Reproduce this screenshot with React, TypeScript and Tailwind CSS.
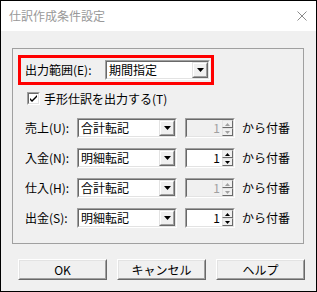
import React from "react";

const font = { fontFamily: '"Noto Sans CJK JP", "Noto Sans", sans-serif' };

function DropBtn({ disabled = false }: { disabled?: boolean }) {
  return (
    <div className="w-[16px] h-full border border-t-[#e3e3e3] border-l-[#e3e3e3] border-b-[#696969] border-r-[#696969] bg-[#f0f0f0]">
      <div className="w-full h-full border border-t-white border-l-white border-b-[#a0a0a0] border-r-[#a0a0a0] flex items-center justify-center">
        <svg width="7" height="4" viewBox="0 0 7 4">
          <polygon points="0,0 7,0 3.5,4" fill={disabled ? "#a0a0a0" : "#000"} />
        </svg>
      </div>
    </div>
  );
}

function Sunken({ className, children, bg = "bg-white" }: { className: string; children: React.ReactNode; bg?: string }) {
  return (
    <div className={`${className} border border-t-[#a0a0a0] border-l-[#a0a0a0] border-b-white border-r-white`}>
      <div className={`w-full h-full border border-t-[#696969] border-l-[#696969] border-b-[#e3e3e3] border-r-[#e3e3e3] ${bg} flex items-center`}>
        {children}
      </div>
    </div>
  );
}

function Combo({ value, width }: { value: string; width: string }) {
  return (
    <Sunken className={`${width} h-[20px]`}>
      <span className="flex-1 pl-[2px] text-[12px] leading-none text-black">{value}</span>
      <DropBtn />
    </Sunken>
  );
}

function Spin({ enabled }: { enabled: boolean }) {
  return (
    <Sunken className="w-[50px] h-[20px]" bg={enabled ? "bg-white" : "bg-[#f0f0f0]"}>
      <span className={`flex-1 text-right pr-[2px] text-[12px] leading-none ${enabled ? "text-black" : "text-[#a0a0a0]"}`}>1</span>
      <div className="w-[11px] h-full flex flex-col">
        {[0, 1].map((i) => (
          <div
            key={i}
            className="flex-1 border border-t-[#e3e3e3] border-l-[#e3e3e3] border-b-[#696969] border-r-[#696969] bg-[#f0f0f0] flex items-center justify-center"
          >
            <svg width="5" height="3" viewBox="0 0 5 3">
              <polygon
                points={i === 0 ? "0,3 5,3 2.5,0" : "0,0 5,0 2.5,3"}
                fill={enabled ? "#000" : "#a0a0a0"}
              />
            </svg>
          </div>
        ))}
      </div>
    </Sunken>
  );
}

function Row({ label, value, enabled }: { label: string; value: string; enabled: boolean }) {
  return (
    <div className="flex items-center h-[20px] pl-[7px]">
      <span className="w-[52px] text-[12px] leading-none text-black">{label}</span>
      <Combo value={value} width="w-[100px]" />
      <div className="ml-[8px]">
        <Spin enabled={enabled} />
      </div>
      <span className="ml-[7px] text-[12px] leading-none text-black">から付番</span>
    </div>
  );
}

function Btn({ label }: { label: string }) {
  return (
    <div className="w-[89px] h-[21px] border border-t-white border-l-white border-b-[#696969] border-r-[#696969] bg-[#f0f0f0]">
      <div className="w-full h-full border border-t-[#e3e3e3] border-l-[#e3e3e3] border-b-[#a0a0a0] border-r-[#a0a0a0] flex items-center justify-center text-[12px] leading-none text-black">
        {label}
      </div>
    </div>
  );
}

export default function App() {
  return (
    <div className="w-[317px] h-[292px] border border-black bg-[#f0f0f0] flex flex-col" style={font}>
      <div className="h-[30px] bg-white flex items-center justify-between pl-[8px] pr-[9px]">
        <span className="text-[12px] leading-none text-[#999999]">仕訳作成条件設定</span>
        <svg width="10" height="10" viewBox="0 0 10 10">
          <path d="M0.5 0.5 L9.5 9.5 M9.5 0.5 L0.5 9.5" stroke="#8a8a8a" strokeWidth="1" />
        </svg>
      </div>
      <div className="flex-1 px-[11px] pt-[17px]">
        <div className="w-[292px] h-[196px] border border-[#a0a0a0] pl-[5px] pt-[6px]">
          <div className="w-[196px] h-[30px] border-[3px] border-[#ff0000] flex items-center pl-[4px]">
            <span className="w-[80px] text-[12px] leading-none text-black">出力範囲(E):</span>
            <Combo value="期間指定" width="w-[105px]" />
          </div>
          <div className="flex items-center mt-[7px] ml-[9px] h-[13px]">
            <div className="w-[13px] h-[13px] border border-t-[#a0a0a0] border-l-[#a0a0a0] border-b-white border-r-white">
              <div className="w-full h-full border border-t-[#696969] border-l-[#696969] border-b-[#e3e3e3] border-r-[#e3e3e3] bg-white flex items-center justify-center">
                <svg width="7" height="7" viewBox="0 0 7 7">
                  <path d="M0 3 L2 5 L7 0 L7 2 L2 7 L0 5 Z" fill="#000" />
                </svg>
              </div>
            </div>
            <span className="ml-[4px] text-[12px] leading-none text-black">手形仕訳を出力する(T)</span>
          </div>
          <div className="mt-[13px] flex flex-col gap-[10px]">
            <Row label="売上(U):" value="合計転記" enabled={false} />
            <Row label="入金(N):" value="明細転記" enabled={true} />
            <Row label="仕入(H):" value="合計転記" enabled={false} />
            <Row label="出金(S):" value="明細転記" enabled={true} />
          </div>
        </div>
        <div className="mt-[15px] ml-[6px] flex gap-[10px]">
          <Btn label="OK" />
          <Btn label="キャンセル" />
          <Btn label="ヘルプ" />
        </div>
      </div>
    </div>
  );
}
